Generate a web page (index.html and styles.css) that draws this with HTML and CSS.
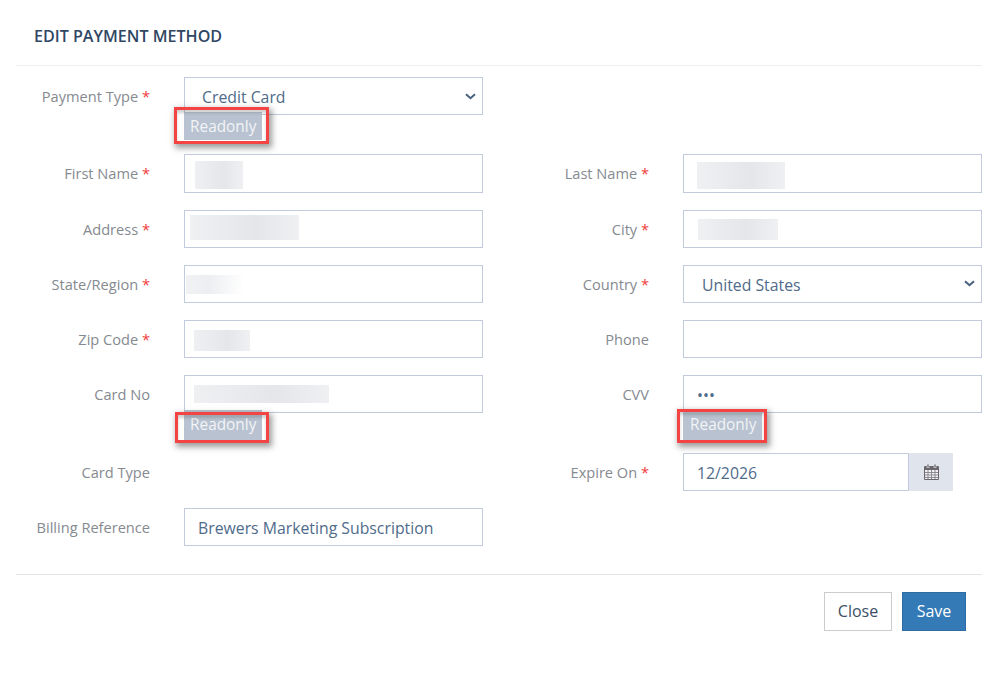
FILE: index.html
```html
<!DOCTYPE html>
<html lang="en">
<head>
<meta charset="utf-8">
<title>Edit Payment Method</title>
<link rel="stylesheet" href="styles.css">
</head>
<body>
<div class="modal">
  <header class="modal-head"><h1 class="modal-title">EDIT PAYMENT METHOD</h1></header>
  <form class="form">
    <div class="row row-tagged">
      <label class="label">Payment Type <span class="req">*</span></label>
      <div class="field">
        <select class="control select"><option>Credit Card</option></select>
        <svg class="chev" width="11" height="7" viewBox="0 0 11 7"><path d="M1 1.2 5.5 5.2 10 1.2" fill="none" stroke="#48617f" stroke-width="2"/></svg>
        <span class="tag tag-type">Readonly</span>
      </div>
    </div>
    <div class="row row-first">
      <label class="label">First Name <span class="req">*</span></label>
      <div class="field"><input class="control" type="text"><span class="blur blur-first"></span></div>
      <label class="label">Last Name <span class="req">*</span></label>
      <div class="field"><input class="control" type="text"><span class="blur blur-last"></span></div>
    </div>
    <div class="row">
      <label class="label">Address <span class="req">*</span></label>
      <div class="field"><input class="control" type="text"><span class="blur blur-address"></span></div>
      <label class="label">City <span class="req">*</span></label>
      <div class="field"><input class="control" type="text"><span class="blur blur-city"></span></div>
    </div>
    <div class="row">
      <label class="label">State/Region <span class="req">*</span></label>
      <div class="field"><input class="control" type="text"><span class="blur blur-state"></span></div>
      <label class="label">Country <span class="req">*</span></label>
      <div class="field">
        <select class="control select select-country"><option>United States</option></select>
        <svg class="chev chev-country" width="11" height="7" viewBox="0 0 11 7"><path d="M1 1.2 5.5 5.2 10 1.2" fill="none" stroke="#48617f" stroke-width="2"/></svg>
      </div>
    </div>
    <div class="row">
      <label class="label">Zip Code <span class="req">*</span></label>
      <div class="field"><input class="control" type="text"><span class="blur blur-zip"></span></div>
      <label class="label">Phone</label>
      <div class="field"><input class="control" type="text"></div>
    </div>
    <div class="row row-tagged row-tagged-wide">
      <label class="label">Card No</label>
      <div class="field"><input class="control" type="text"><span class="blur blur-card"></span><span class="tag tag-card">Readonly</span></div>
      <label class="label">CVV</label>
      <div class="field"><input class="control" type="password" value="123"><span class="tag tag-cvv">Readonly</span></div>
    </div>
    <div class="row">
      <label class="label">Card Type</label>
      <div class="field"></div>
      <label class="label">Expire On <span class="req">*</span></label>
      <div class="field date">
        <input class="control date-input" type="text" value="12/2026">
        <span class="addon">
          <svg width="15" height="16" viewBox="0 0 15 16"><path d="M.5 2.5h14v13H.5z" fill="#f1f1f3" stroke="#6a666c"/><path d="M1 2.5h13V6H1z" fill="#6a666c"/><path d="M1 8.5h13M1 11h13M1 13.5h13M4 6v9M7.5 6v9M11 6v9" fill="none" stroke="#8d8b92"/><path d="M4 .5v3.4M11 .5v3.4" stroke="#e0e4ec" stroke-width="2.6"/><path d="M4 .5v3M11 .5v3" stroke="#6a666c" stroke-width="1.3"/></svg>
        </span>
      </div>
    </div>
    <div class="row row-last">
      <label class="label">Billing Reference</label>
      <div class="field"><input class="control" type="text" value="Brewers Marketing Subscription"></div>
    </div>
    <footer class="modal-foot">
      <button class="btn btn-close" type="button">Close</button>
      <button class="btn btn-save" type="button">Save</button>
    </footer>
  </form>
</div>
</body>
</html>
```
FILE: styles.css
```css
* { box-sizing: border-box; }
html, body { margin: 0; background: #fff; }
body { font-family: "Open Sans", "Liberation Sans", sans-serif; font-size: 15px; color: #4f6b8a; }
.modal { width: 966px; margin-left: 16px; }
.modal-head { height: 66px; padding: 26px 0 0 18px; border-bottom: 1px solid #eceef0; }
.modal-title { margin: 0; font-size: 16.1px; line-height: 20px; font-weight: 600; color: #2f4763; white-space: nowrap; }
.form { padding-top: 11px; }
.row { display: grid; grid-template-columns: 134px 299px 132px 299px; column-gap: 34px; height: 38px; margin-bottom: 17px; align-items: center; }
.row-tagged { margin-bottom: 39px; }
.row-tagged-wide { margin-bottom: 40px; }
.row-first { height: 39px; }
.row-first .label { padding-bottom: 1px; }
.row-last { margin-bottom: 0; }
.label { text-align: right; font-size: 14.6px; color: #858a90; white-space: nowrap; }
.req { color: #ef3b3b; }
.field { position: relative; height: 100%; }
.control { display: block; width: 100%; height: 100%; padding: 1px 13px 0; border: 1px solid #c1cbdb; border-radius: 0; background: #fff; font: 15.8px "Open Sans", sans-serif; color: #4f6b8a; outline: none; }
.select { appearance: none; padding-left: 17px; padding-top: 2px; }
.select-country { padding-left: 18px; }
.chev { position: absolute; right: 7px; top: 16px; pointer-events: none; }
.chev-country { top: 15px; }
.date { display: flex; width: 270px; }
.date-input { flex: 1; min-width: 0; }
.addon { flex: 0 0 44px; display: flex; align-items: center; justify-content: center; background: #e0e4ec; }
.tag { position: absolute; left: 0; width: 78px; height: 28px; padding-left: 6px; background: #b8c2d0; color: #f2f4f7; font-size: 15.4px; line-height: 30px; }
.tag::after { content: ""; position: absolute; border: 3px solid #f44343; box-shadow: 2px 3px 6px 1px rgba(60, 60, 60, .5), inset 0 3px 3px rgba(70, 70, 70, .25); pointer-events: none; }
.tag-type { top: 35px; }
.tag-type::after { left: -10px; top: -5px; right: -7px; bottom: -4px; }
.tag-card { top: 35px; height: 30px; line-height: 30px; }
.tag-card::after { left: -9px; top: 2px; right: -7px; bottom: -3px; }
.tag-cvv { top: 38px; width: 79px; height: 27px; padding-left: 7px; line-height: 23px; }
.tag-cvv::after { left: -6px; top: -4px; right: -5px; bottom: -3px; }
.blur { position: absolute; background: linear-gradient(90deg, #eef0f2, #e4e6ea 60%, #eef0f2); pointer-events: none; }
.blur-first { left: 11px; top: 7px; width: 48px; height: 28px; }
.blur-last { left: 14px; top: 8px; width: 88px; height: 27px; }
.blur-address { left: 6px; top: 5px; width: 109px; height: 25px; }
.blur-city { left: 15px; top: 9px; width: 80px; height: 21px; }
.blur-state { left: 2px; top: 10px; width: 58px; height: 19px; background: linear-gradient(90deg, #f1f2f4, #eceef1 40%, #fff); }
.blur-zip { left: 10px; top: 10px; width: 56px; height: 21px; }
.blur-card { left: 10px; top: 10px; width: 135px; height: 18px; }
.modal-foot { display: flex; justify-content: flex-end; gap: 10px; margin-top: 28px; padding: 17px 16px 0 0; border-top: 1px solid #e3e5e7; }
.btn { height: 39px; padding: 0 0 2px; font: 16px "Open Sans", sans-serif; border-radius: 0; }
.btn-close { width: 68px; background: #fff; border: 1px solid #ccc; color: #3c4f66; }
.btn-save { width: 64px; background: #337ab7; border: 1px solid #2e6da4; color: #fff; }
```
